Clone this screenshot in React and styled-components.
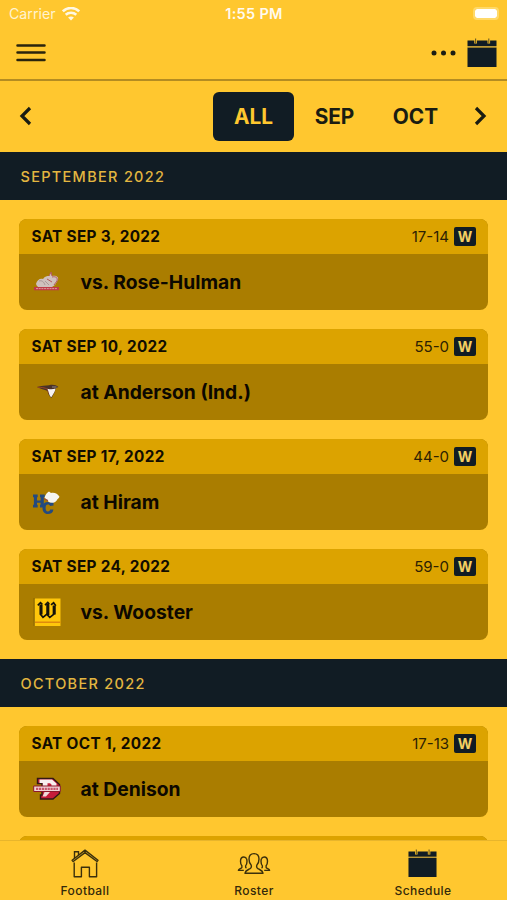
import React from 'react'
import styled, { createGlobalStyle } from 'styled-components'

const months = [
  {
    title: 'SEPTEMBER 2022',
    games: [
      { date: 'SAT SEP 3, 2022', score: '17-14', team: 'vs. Rose-Hulman', logo: 'rose' },
      { date: 'SAT SEP 10, 2022', score: '55-0', team: 'at Anderson (Ind.)', logo: 'anderson' },
      { date: 'SAT SEP 17, 2022', score: '44-0', team: 'at Hiram', logo: 'hiram' },
      { date: 'SAT SEP 24, 2022', score: '59-0', team: 'vs. Wooster', logo: 'wooster' },
    ],
  },
  {
    title: 'OCTOBER 2022',
    games: [
      { date: 'SAT OCT 1, 2022', score: '17-13', team: 'at Denison', logo: 'denison' },
      { date: '', score: '', team: '', logo: '' },
    ],
  },
]

const CalendarIcon = ({ size }) => (
  <svg width={size} height={size} viewBox="0 0 30 30">
    <path d="M.5 2.5h29V8H.5zM.5 9.4h29V29H.5z" fill="#111c24" />
    <path d="M8.6 0v5.6M21.8 0v5.6" stroke="#ffc72f" strokeWidth="2.6" />
    <path d="M8.6 .4v5M21.8 .4v5" stroke="#6b5a22" strokeWidth="1.1" />
    <path d="M.5 8.7h29" stroke="#b3923a" strokeWidth="1.1" />
  </svg>
)

const HouseIcon = () => (
  <svg width="30" height="30" viewBox="0 0 30 30" fill="none" stroke="#3b300c" strokeWidth="1.4" strokeLinejoin="round">
    <path d="M4.2 13.5V27.7h7.2V18.2h8v9.5h7.2V13.5" />
    <path d="M2.1 11.2L15 1.1l13 10.1-1 1.3L15 3.6 3.2 12.5z" />
    <path d="M4.5 9.2V2.8h4v3.3M3.8 2.8h5.4" />
  </svg>
)

const PeopleIcon = () => (
  <svg width="34" height="30" viewBox="0 -2 34 30" fill="none" stroke="#3b300c" strokeWidth="1.4" strokeLinejoin="round">
    <path d="M17 2.6c-3.400 0-5 2.400-5 5.400 0 2.300.7 4.600 2.100 6.100.6 1.600.1 2.900-1 3.600-2.300 1.300-4.700 1.500-5.100 4.500h18c-.4-3-2.800-3.200-5.100-4.500-1.100-.7-1.600-2-1-3.600C21.300 12.600 22 10.300 22 8c0-3-1.600-5.400-5-5.400z" />
    <path d="M9.300 7.300c-.7-.9-1.500-1.300-2.500-1.300-2.200 0-3.300 1.700-3.300 4.200 0 2 .5 3.600 1.400 4.600.3 1.400-.1 2.200-1 2.600-1.300.6-2.300.8-2.500 2h5.400" />
    <path d="M9.300 7.300c.5 1 .7 2 .7 3 0 2-.5 3.600-1.400 4.600-.2 1.100.1 1.800.8 2.300" />
    <path d="M24.700 7.300c.7-.9 1.500-1.300 2.500-1.300 2.200 0 3.300 1.700 3.300 4.200 0 2-.5 3.600-1.400 4.600-.3 1.400.1 2.200 1 2.600 1.300.6 2.300.8 2.500 2h-5.400" />
    <path d="M24.700 7.300c-.5 1-.7 2-.7 3 0 2 .5 3.600 1.400 4.600.2 1.100-.1 1.800-.8 2.300" />
  </svg>
)

const WifiIcon = () => (
  <svg width="18" height="14" viewBox="0 0 18 14" fill="none" stroke="#fff8e4" strokeWidth="2.6">
    <path d="M.8 4.300c4.700-4.400 11.700-4.400 16.400 0" />
    <path d="M3.700 7.700c3-2.700 7.600-2.700 10.600 0" />
    <path d="M9 13.600L6.100 10.600c1.700-1.400 4.100-1.400 5.800 0z" fill="#fff8e4" stroke="none" />
  </svg>
)

const logos = {
  rose: (
    <>
      <path d="M3 16c1-4 4-6 7-5 2-3 4-3 6-3l2-4 1 4c4-1 7 1 6 4l-3 5-3 2H9c-3 1-5 0-6-3z" fill="#cfc0bd" />
      <path d="M16 8l2-4 1 4M19 9c4-1 6 1 5 4l-3 4M14 11l5 3" stroke="#b5595c" strokeWidth="1" fill="none" />
      <path d="M6 13c3-1 5 1 6 4M12 13l4 4" stroke="#ab9899" strokeWidth="1" fill="none" />
      <path d="M1 19h25v3.200H1z" fill="#bf3a48" />
      <path d="M3 20.600h21" stroke="#dd9a9b" strokeWidth="1" strokeDasharray="2 .7" />
    </>
  ),
  anderson: (
    <>
      <path d="M4 9c4-1.400 9-1 12-1.700 4-1 7-.2 9.500 1.800l-2.500.9-1.500 4.500-3 5.500c-2-1.500-3.500-4-4-7-3-1.600-7-1.700-10.500-4z" fill="#4a3229" />
      <path d="M4.500 9.200c4 .3 7 .3 10 2l1.500 4.500" stroke="#9a4522" strokeWidth="1" fill="none" />
      <path d="M14.500 10.800c3 .8 5.700.6 8-.3-.2 2.200-1.300 3.700-2.200 5.400l-2 3.300c-1.300-1-2.200-2.600-2.500-4.800z" fill="#f5f2f2" />
      <path d="M19 9h4.500" stroke="#8e8888" strokeWidth="1" />
    </>
  ),
  hiram: (
    <>
      <path d="M0 6.500h4.700v2.700H4v3.300h3.600V9.200H7V6.500h4.700v2.700h-.9v7.600h.9v2.700H7v-2.700h.6v-2H4v2h.7v2.700H0v-2.700h.9V9.200H0z" fill="#244a7f" />
      <path d="M20.500 17.500V14h-2.300l-.7.700c-1-.6-2-.8-3.300-.7-3.200.4-4.700 2.500-4.700 6s2 6 5.200 6 5.500-1.500 5.700-4.500h-3.200c-.3 1.300-1.200 1.900-2.300 1.900-1.700 0-2.300-1.400-2.300-3.600s.8-3.400 2.200-3.400c1.300 0 2 .5 2.300 1.600z" fill="#244a7f" />
      <path d="M11.500 9.500c1-3 2.500-5 4.500-6l2 1.500c4-.8 6.500 1 8.500 3.700-1 2-2 2-3 4-1.200 2-5.500 3-8 1l-1-1.200z" fill="#f6f5f0" />
      <path d="M11 10.800l4 1.800" stroke="#9b493f" strokeWidth="1.200" />
    </>
  ),
  wooster: (
    <>
      <path d="M1.500 .5H27.500v27.500H1.500z" fill="#ffc70b" />
      <path d="M1.200 .5v27.500" stroke="#6b5207" strokeWidth="1.400" strokeDasharray="1 1" />
      <path d="M2 24.300h25.500" stroke="#df8a0d" strokeWidth="1.500" />
      {/* blackletter W */}
      <g fill="none" stroke="#14120b">
        <path d="M8 6.500v10M14.800 6v11M21.200 7.500v9" strokeWidth="3.100" />
        <path d="M4.800 7.300l2.700-2.600 1.800 1.600M12 7.200l2.800-2.700 1.500 1.500M18 6.800l2.600-2 2.200 3M7.200 16l2.800 3.300 4.200-3.500M14 16.500l2.800 2.800 4.500-3.500" strokeWidth="1.700" />
      </g>
    </>
  ),
  denison: (
    <>
      <path d="M4.500 3.500H20l6.500 6v9L20 24H7.500v-4H9V8.500H4.500z" fill="#c61c3a" stroke="#321817" strokeWidth="1.400" />
      <path d="M6.500 4.600h12.500l4.500 4v3h-5V9.500l-1.500-1.200h-2.500v4H9.800V8H6.500z" fill="#f8eeee" />
      <path d="M11.500 17h5.500l-4 4.500H9.500z" fill="#f0dada" />
      <path d="M.7 11h26.600v5.500H.7z" fill="#f0d3d7" stroke="#8d192a" strokeWidth="1" />
      <path d="M3 13.800h22" stroke="#c8566b" strokeWidth="2.200" strokeDasharray="2.200 .7" />
    </>
  ),
}

const App = () => {
  return (
    <Screen>
      <GlobalStyle />
      <StatusBar>
        <Carrier>Carrier <WifiIcon /></Carrier>
        <Clock>1:55 PM</Clock>
        <BatterySlot>
          <Battery />
        </BatterySlot>
      </StatusBar>

      <NavBar>
        <svg width="30" height="20" viewBox="0 0 30 20" stroke="#2a240d" strokeWidth="2.5" strokeLinecap="round">
          <path d="M1.500 2.500h27M1.500 9.600h27M1.500 17h27" />
        </svg>
        <NavActions>
          <svg width="26" height="6" viewBox="0 0 26 6" fill="#1c1d13">
            <circle cx="3" cy="3" r="2.500" />
            <circle cx="12.500" cy="3" r="2.500" />
            <circle cx="22" cy="3" r="2.500" />
          </svg>
          <CalendarIcon size={30} />
        </NavActions>
      </NavBar>

      <MonthBar>
        <Arrow width="14" height="20" viewBox="0 0 14 20">
          <path d="M11 2L3 10l8 8" />
        </Arrow>
        <MonthTabs>
          <MonthTab $active>ALL</MonthTab>
          <MonthTab>SEP</MonthTab>
          <MonthTab>OCT</MonthTab>
        </MonthTabs>
        <Arrow width="14" height="20" viewBox="0 0 14 20">
          <path d="M3 2l8 8-8 8" />
        </Arrow>
      </MonthBar>

      <Schedule>
        {months.map((month) => (
          <section key={month.title}>
            <MonthTitle>{month.title}</MonthTitle>
            <Games>
              {month.games.map((game, i) => (
                <Card key={i}>
                  <CardHeader>
                    <GameDate>{game.date}</GameDate>
                    {game.score && (
                      <Result>
                        {game.score}
                        <Badge>W</Badge>
                      </Result>
                    )}
                  </CardHeader>
                  <CardBody>
                    <svg width="28" height="28" viewBox="0 0 28 28">{logos[game.logo]}</svg>
                    <Team>{game.team}</Team>
                  </CardBody>
                </Card>
              ))}
            </Games>
          </section>
        ))}
      </Schedule>

      <TabBar>
        <Tab>
          <TabIcon><HouseIcon /></TabIcon>
          <TabLabel>Football</TabLabel>
        </Tab>
        <Tab>
          <TabIcon><PeopleIcon /></TabIcon>
          <TabLabel>Roster</TabLabel>
        </Tab>
        <Tab>
          <TabIcon><CalendarIcon size={29} /></TabIcon>
          <TabLabel>Schedule</TabLabel>
        </Tab>
      </TabBar>
    </Screen>
  )
}

export default App

const GlobalStyle = createGlobalStyle`
  * {
    box-sizing: border-box;
  }
  body {
    margin: 0;
    background: #ffc72f;
    font-family: Inter, 'Liberation Sans', sans-serif;
  }
  svg {
    display: block;
    flex-shrink: 0;
  }
`

const Screen = styled.div`
  width: 100%;
  height: 100vh;
  display: flex;
  flex-direction: column;
  overflow: hidden;
  background: #ffc72f;
  color: #111c24;
`

const StatusBar = styled.div`
  height: 27px;
  flex-shrink: 0;
  display: grid;
  grid-template-columns: 1fr auto 1fr;
  align-items: center;
  padding: 0 8px 0 9px;
  color: #fff3d0;
`

const Carrier = styled.div`
  display: flex;
  align-items: center;
  gap: 6px;
  font-size: 14.2px;
`

const Clock = styled.div`
  font-size: 14.5px;
  font-weight: 600;
  letter-spacing: 0.3px;
  color: #fffaf0;
`

const BatterySlot = styled.div`
  display: flex;
  justify-content: flex-end;
`

const Battery = styled.div`
  width: 26px;
  height: 13px;
  border: 2px solid #ffd968;
  border-radius: 4px;
  background: #fff;
  background-clip: padding-box;
`

const NavBar = styled.div`
  height: 54px;
  flex-shrink: 0;
  display: flex;
  align-items: center;
  justify-content: space-between;
  padding: 0 10px 0 16px;
  border-bottom: 2px solid #b48c22;
`

const NavActions = styled.div`
  display: flex;
  align-items: center;
  gap: 10px;
`

const MonthBar = styled.div`
  height: 70.5px;
  flex-shrink: 0;
  display: flex;
  align-items: center;
  padding: 0 20px 0 19px;
`

const Arrow = styled.svg`
  fill: none;
  stroke: #1a1c12;
  stroke-width: 3.2;
`

const MonthTabs = styled.div`
  flex: 1;
  display: flex;
  justify-content: flex-end;
  padding-right: 17px;
`

const MonthTab = styled.div`
  width: 81px;
  height: 49px;
  display: flex;
  align-items: center;
  justify-content: center;
  border-radius: 6px;
  font-size: 20.8px;
  font-weight: 700;
  background: ${({ $active }) => ($active ? '#111c24' : 'transparent')};
  color: ${({ $active }) => ($active ? '#ffc72f' : '#1a1c12')};
`

const Schedule = styled.div`
  flex: 1;
  min-height: 0;
  overflow: hidden;
`

const MonthTitle = styled.div`
  height: 48.5px;
  display: flex;
  align-items: center;
  padding: 1px 0 0 20.5px;
  background: #111c24;
  color: #e3b640;
  font-size: 14.5px;
  font-weight: 500;
  letter-spacing: 1.3px;
`

const Games = styled.div`
  display: flex;
  flex-direction: column;
  gap: 19px;
  padding: 19px 19px 18.5px;
`

const Card = styled.div`
  border-radius: 8px;
  overflow: hidden;
  background: #aa7d00;
`

const CardHeader = styled.div`
  height: 35px;
  display: flex;
  align-items: center;
  justify-content: space-between;
  padding: 0 12px 0 12.5px;
  background: #dca300;
`

const GameDate = styled.div`
  font-size: 15.3px;
  font-weight: 700;
  letter-spacing: 0.35px;
  color: #120d00;
`

const Result = styled.div`
  display: flex;
  align-items: center;
  gap: 5px;
  font-size: 15px;
  color: #2c2103;
`

const Badge = styled.div`
  width: 22px;
  height: 19px;
  display: flex;
  align-items: center;
  justify-content: center;
  border-radius: 2px;
  background: #111c24;
  color: #f3cf62;
  font-size: 14px;
  font-weight: 700;
`

const CardBody = styled.div`
  height: 56px;
  display: flex;
  align-items: center;
  gap: 20px;
  padding-left: 13.5px;
`

const Team = styled.div`
  font-size: 19.3px;
  font-weight: 700;
  color: #0c0800;
`

const TabBar = styled.div`
  height: 60px;
  flex-shrink: 0;
  display: grid;
  grid-template-columns: repeat(3, 1fr);
  border-top: 1px solid #e8b52c;
`

const Tab = styled.div`
  display: flex;
  flex-direction: column;
  align-items: center;
  padding-top: 8px;
`

const TabIcon = styled.div`
  height: 34px;
`

const TabLabel = styled.div`
  padding-left: 1px;
  font-size: 12px;
  line-height: 15px;
  font-weight: 500;
  letter-spacing: 0.4px;
  color: #33290a;
`
